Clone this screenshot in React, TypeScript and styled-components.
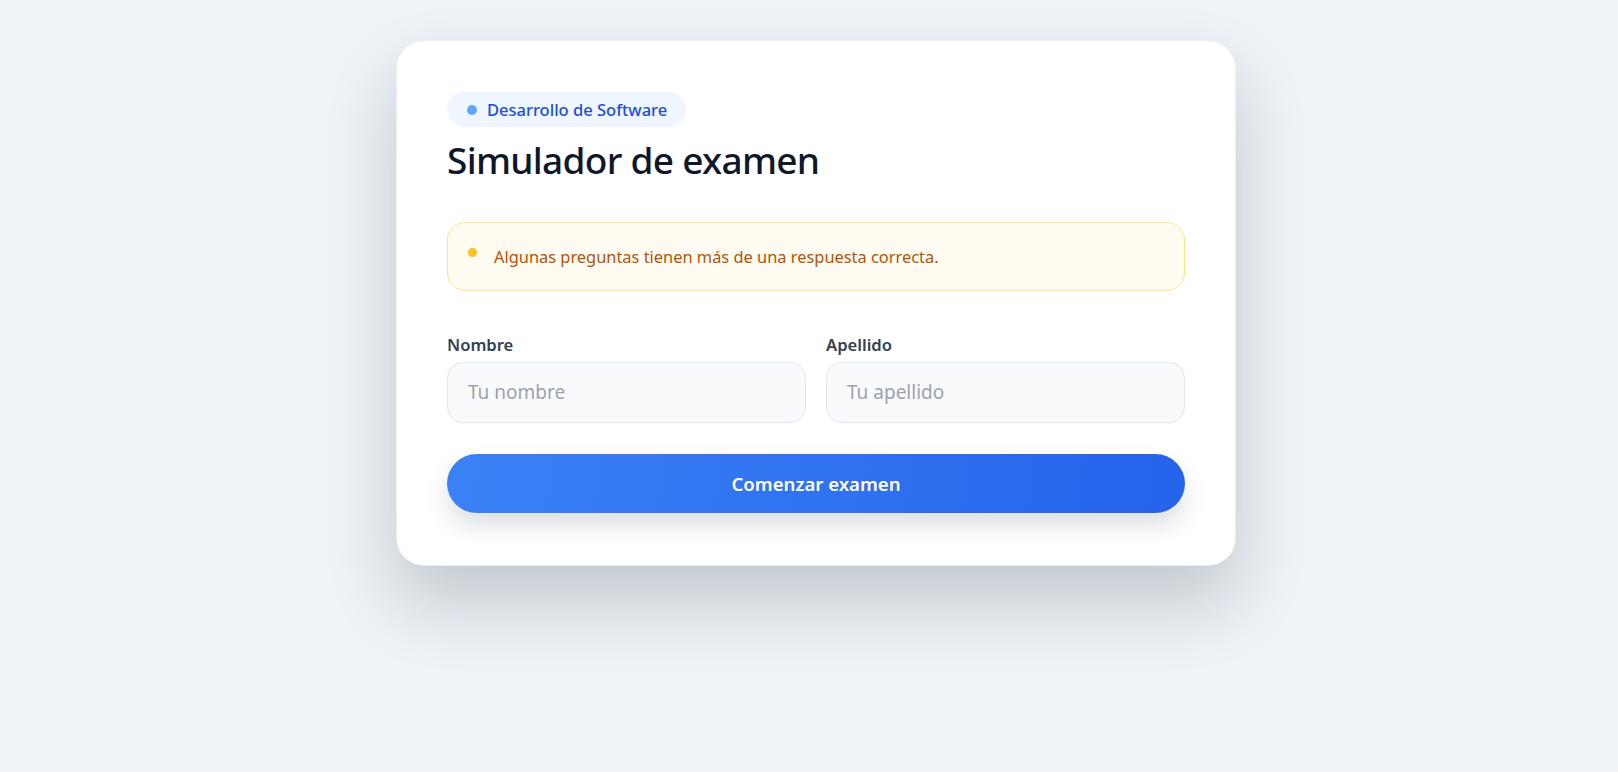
import React from 'react';
import styled, { createGlobalStyle } from 'styled-components';

const GlobalStyle = createGlobalStyle`
  * {
    box-sizing: border-box;
  }

  body {
    margin: 0;
    background: #eff3f8;
    font-family: 'Noto Sans', 'Open Sans', Arial, sans-serif;
    color: #0f172a;
  }
`;

function App() {
  return (
    <>
      <GlobalStyle />
      <Page>
        <Card>
          <Badge>
            <Dot color="#60a5fa" />
            Desarrollo de Software
          </Badge>
          <Title>Simulador de examen</Title>

          <Notice>
            <Dot color="#fbbf24" size={9} />
            <NoticeText>Algunas preguntas tienen más de una respuesta correcta.</NoticeText>
          </Notice>

          <Fields>
            <Field>
              <Label htmlFor="nombre">Nombre</Label>
              <Input id="nombre" placeholder="Tu nombre" />
            </Field>
            <Field>
              <Label htmlFor="apellido">Apellido</Label>
              <Input id="apellido" placeholder="Tu apellido" />
            </Field>
          </Fields>

          <StartButton type="button">Comenzar examen</StartButton>
        </Card>
      </Page>
    </>
  );
}

export default App;

const Page = styled.main`
  min-height: 100vh;
  display: flex;
  justify-content: center;
  align-items: flex-start;
  padding: 40px 0 0 14px;
`;

const Card = styled.section`
  width: 840px;
  padding: 51px 50px 52px;
  background: #ffffff;
  border: 1px solid rgba(226, 232, 240, 0.7);
  border-radius: 28px;
  box-shadow: 0 36px 70px rgba(15, 23, 42, 0.2);
  display: flex;
  flex-direction: column;
`;

const Badge = styled.span`
  align-self: flex-start;
  display: inline-flex;
  align-items: center;
  gap: 10px;
  height: 35px;
  padding: 0 19px 0 20px;
  border-radius: 999px;
  background: #eff6ff;
  color: #1d4ed8;
  font-size: 16.5px;
  font-weight: 500;
`;

const Dot = styled.span<{ color: string; size?: number }>`
  flex: none;
  width: ${(p) => p.size ?? 10}px;
  height: ${(p) => p.size ?? 10}px;
  border-radius: 50%;
  background: ${(p) => p.color};
`;

const Title = styled.h1`
  margin: 10px 0 0;
  font-size: 37px;
  line-height: 1.23;
  font-weight: 500;
  color: #0f172a;
  letter-spacing: -0.7px;
`;

const Notice = styled.div`
  margin-top: 39px;
  display: flex;
  align-items: flex-start;
  gap: 17px;
  padding: 21px 20px;
  background: #fffbf0;
  border: 1px solid #fde68a;
  border-radius: 18px;

  ${Dot} {
    margin-top: 4px;
  }
`;

const NoticeText = styled.p`
  margin: 0;
  font-size: 16.4px;
  line-height: 25px;
  color: #b45309;
`;

const Fields = styled.div`
  margin-top: 43px;
  display: grid;
  grid-template-columns: 1fr 1fr;
  gap: 20px;
`;

const Field = styled.div`
  display: flex;
  flex-direction: column;
  gap: 6px;
`;

const Label = styled.label`
  font-size: 16.6px;
  line-height: 22px;
  font-weight: 600;
  color: #334155;
`;

const Input = styled.input`
  height: 61px;
  padding: 0 20px;
  border: 1px solid #e2e8f0;
  border-radius: 16px;
  background: #f8fafc;
  font-family: inherit;
  font-size: 19px;
  color: #0f172a;
  outline: none;

  &::placeholder {
    color: #9ca3af;
  }
`;

const StartButton = styled.button`
  margin-top: 31px;
  height: 59px;
  border: none;
  border-radius: 999px;
  background: linear-gradient(100deg, #3b82f6 0%, #2563eb 100%);
  box-shadow: 0 12px 24px rgba(15, 23, 42, 0.14);
  color: #ffffff;
  font-family: inherit;
  font-size: 18.6px;
  font-weight: 600;
  cursor: pointer;
`;
